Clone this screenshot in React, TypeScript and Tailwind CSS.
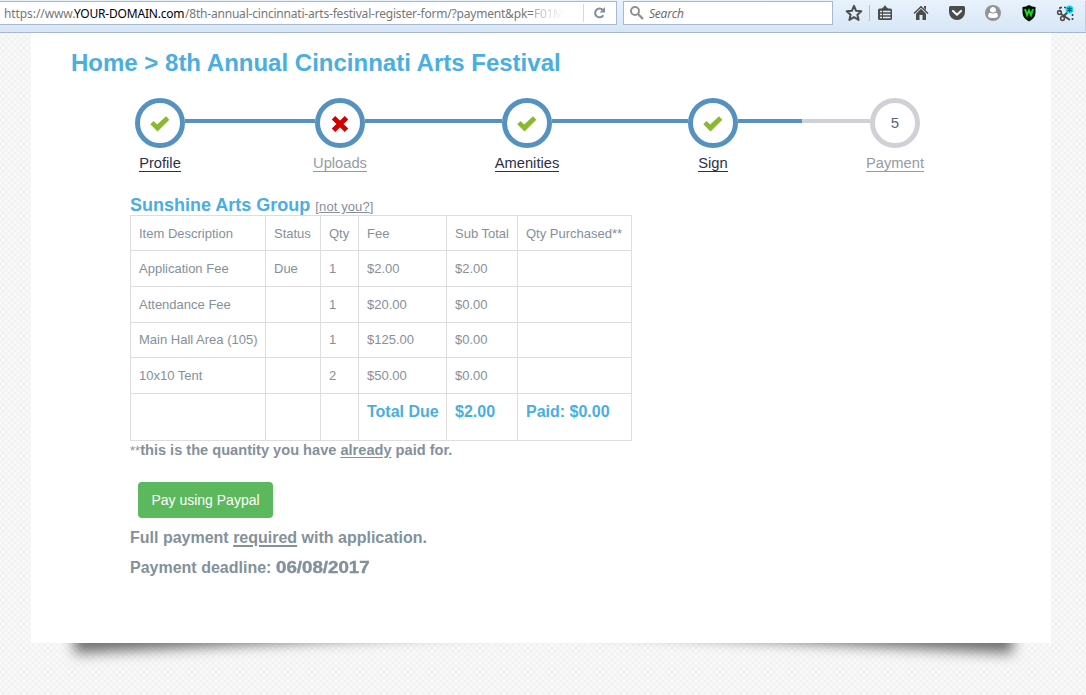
import React from "react";

type State = "done" | "missing" | "pending";

function Check() {
  return (
    <svg className="mt-px" width="20" height="16" viewBox="0 0 20 16">
      <path d="M0.3 8.2L3.5 4.9L7.2 8.5L16 0.3L19.3 3.7L7.5 15.6Z" fill="#8ab92d" />
    </svg>
  );
}

function Cross() {
  return (
    <svg className="mt-[2px]" width="16" height="16" viewBox="0 0 16 16">
      <path d="M3.3 3.5L12.7 12.5M12.7 3.5L3.3 12.5" stroke="#d20000" strokeWidth="5" strokeLinecap="square" />
    </svg>
  );
}

function Step({ label, state }: { label: string; state: State }) {
  return (
    <div className="flex w-[50px] shrink-0 flex-col items-center">
      <div
        className={
          "flex h-[50px] w-[50px] items-center justify-center rounded-full border-[5px] text-[15px] text-[#5c6472] " +
          (state === "pending" ? "border-[#cfd1d6]" : "border-[#5592c0]")
        }
      >
        {state === "done" && <Check />}
        {state === "missing" && <Cross />}
        {state === "pending" && "5"}
      </div>
      <a
        className={
          "mt-[6px] border-b text-[14.7px] leading-[17px] whitespace-nowrap " +
          (state === "done" ? "border-[#2b3048] text-[#2b3048]" : "border-[#959ba5] text-[#959ba5]")
        }
      >
        <span className="relative top-px">{label}</span>
      </a>
    </div>
  );
}

function Line({ className }: { className: string }) {
  return <div className={"mt-[21px] h-1 shrink-0 " + className} />;
}

const rows = [
  ["Item Description", "Status", "Qty", "Fee", "Sub Total", "Qty Purchased**"],
  ["Application Fee", "Due", "1", "$2.00", "$2.00", ""],
  ["Attendance Fee", "", "1", "$20.00", "$0.00", ""],
  ["Main Hall Area (105)", "", "1", "$125.00", "$0.00", ""],
  ["10x10 Tent", "", "2", "$50.00", "$0.00", ""],
];
const heights = ["h-[35px]", "h-[36px]", "h-[36px]", "h-[35px]", "h-[36px]"];
const cell = "border-r border-b border-[#dddddd] pl-2 whitespace-nowrap";

function Toolbar() {
  return (
    <header className="flex h-[33px] items-start border-b border-[#a5b8cd] bg-linear-to-b from-[#e8f2fc] to-[#d7e6f6] pt-px font-['Noto_Sans','Open_Sans',sans-serif] text-[12px] text-[#777]">
      <div className="flex h-6 w-[617px] shrink-0 items-center border border-l-0 border-[#a7b9cc] bg-white">
        <div className="flex w-[583px] items-center pt-px pl-[4px] leading-[22px] whitespace-nowrap">
          <span className="w-[70px] shrink-0 tracking-[-0.09px]">https://www.</span>
          <span className="w-[111px] shrink-0 tracking-[-0.2px] text-black">YOUR-DOMAIN.com</span>
          <span className="w-[349px] shrink-0 tracking-[-0.2px]">/8th-annual-cincinnati-arts-festival-register-form/?payment&amp;pk=</span>
          <span className="shrink-0 bg-linear-to-r from-[#aaa] to-[#fff] bg-clip-text tracking-[-0.3px] text-transparent">F01M</span>
        </div>
        <div className="h-[18px] w-px bg-[#d5d9de]" />
        <svg className="ml-[9px]" width="14" height="14" viewBox="0 0 14 14">
          <path d="M10.3 9.2A4.4 4.4 0 1 1 9.8 4" fill="none" stroke="#838d9b" strokeWidth="2" />
          <path d="M12 1V6.5H6.5Z" fill="#838d9b" />
        </svg>
      </div>
      <div className="ml-[6px] flex h-6 w-[210px] shrink-0 items-center border border-[#a7b9cc] bg-white pl-[6px]">
        <svg width="14" height="14" viewBox="0 0 14 14" fill="none" stroke="#919191" strokeWidth="2">
          <circle cx="5" cy="5" r="4" />
          <path d="M8 8L13 13" strokeWidth="2.4" />
        </svg>
        <span className="ml-[5px] pt-px font-['Open_Sans',sans-serif] tracking-[-0.2px] text-[#666] italic">Search</span>
      </div>
      <svg className="shrink-0" width="253" height="31" viewBox="833 1 253 31">
        <path d="M854 5.9L856.1 10.8L861.3 11.2L857.4 14.7L858.6 20L854 17.2L849.4 20L850.6 14.7L846.7 11.2L851.9 10.8Z" fill="none" stroke="#4d4d4d" strokeWidth="2" strokeLinejoin="round" />
        <path d="M869.5 5V21" stroke="#b2bfcd" />
        <path d="M882 8.5C882 7.5 884 7.8 884 6.5A1 1 0 0 1 886 6.5C886 7.8 888 7.5 888 8.5H890.5A1.5 1.5 0 0 1 892 10V18.5A1.5 1.5 0 0 1 890.5 20H879.500A1.500 1.500 0 0 1 878 18.500V10A1.500 1.500 0 0 1 879.500 8.500Z" fill="#4b4b4b" />
        <path d="M880 11.500H882M883 11.500H890.500M880 14.500H882M883 14.500H890.500M880 17.500H882M883 17.500H890.500" stroke="#e2edf8" strokeWidth="1.300" />
        <path d="M914 13.500L921 6.700L928 13.500" fill="none" stroke="#4b4b4b" strokeWidth="1.500" />
        <path d="M916 13.700L921 8.800L926 13.700V20H922.500V15H919.500V20H916Z" fill="#4b4b4b" />
        <path d="M924 6H926V10L924 8Z" fill="#4b4b4b" />
        <path d="M950.500 6H963.500A1.500 1.500 0 0 1 965 7.500V12A8 8 0 0 1 949 12V7.500A1.500 1.500 0 0 1 950.500 6Z" fill="#4b4b4b" />
        <path d="M953 11L957 14.800L961 11" fill="none" stroke="#f1f7fd" strokeWidth="2.200" strokeLinecap="round" strokeLinejoin="round" />
        <circle cx="993" cy="13" r="8" fill="#939393" />
        <path d="M993 7A3 3 0 0 1 995.300 12Q998 13 998 16Q997.500 18 993 18Q988.500 18 988 16Q988 13 990.700 12A3 3 0 0 1 993 7Z" fill="white" />
        <path d="M990 12.300Q993 14 996 12.300" fill="none" stroke="#939393" />
        <path d="M1029 5Q1032 7 1035.500 7V13Q1035 18.500 1029 21.500Q1023 18.500 1022.500 13V7Q1026 7 1029 5Z" fill="#071007" />
        <path d="M1025 9L1027 15L1029 10.500L1031 15L1033 9" fill="none" stroke="#13dc18" strokeWidth="2" />
        <path d="M1060 7.500H1066M1060 7V12M1072.500 14V20" fill="none" stroke="#444" strokeWidth="1.600" strokeDasharray="2 2" />
        <g fill="none" stroke="#4a4a4a" strokeWidth="1.500">
          <circle cx="1059.500" cy="12.500" r="1.900" />
          <circle cx="1062.500" cy="18.500" r="1.900" />
          <path d="M1061 14L1070 20M1063.500 16.500L1068.500 11" strokeWidth="2" />
        </g>
        <circle cx="1069.500" cy="9.500" r="4" fill="#16def0" />
        <path d="M1069.500 6.800V12.200M1067 8L1072 11M1072 8L1067 11" stroke="#075d72" strokeWidth="1.200" />
        <path d="M1085.500 1V31" stroke="#c0cfdf" />
      </svg>
    </header>
  );
}

export default function App() {
  return (
    <div className="relative isolate flex h-[695px] w-[1086px] flex-col overflow-hidden bg-[#f8f8f8] font-['Liberation_Sans',Arial,sans-serif] text-[#84919a]">
      <svg className="absolute inset-0 -z-20" width="1086" height="695">
        <defs>
          <pattern id="mesh" width="6" height="6" patternUnits="userSpaceOnUse">
            <path d="M0 0L6 6M6 0L0 6" stroke="#f0f0f0" strokeWidth="1" />
          </pattern>
        </defs>
        <rect width="1086" height="695" fill="url(#mesh)" />
      </svg>
      <Toolbar />
      <div className="relative ml-[31px] h-[610px] w-[1020px] shrink-0">
        <div className="absolute bottom-[17px] left-[41px] -z-10 h-[60px] w-[480px] -rotate-3 shadow-[0_15px_13px_#707070]" />
        <div className="absolute right-[36px] bottom-[17px] -z-10 h-[60px] w-[480px] rotate-3 shadow-[0_15px_13px_#707070]" />
        <main className="h-full bg-white pt-[16px]">
          <h1 className="pl-10 text-[24px] leading-[28px] font-bold text-[#49aee0]">Home &gt; 8th Annual Cincinnati Arts Festival</h1>
          <div className="mt-[21px] flex h-[74px] items-start pl-[104px]">
            <Step label="Profile" state="done" />
            <Line className="w-[130px] bg-[#5592c0]" />
            <Step label="Uploads" state="missing" />
            <Line className="w-[137px] bg-[#5592c0]" />
            <Step label="Amenities" state="done" />
            <Line className="w-[136px] bg-[#5592c0]" />
            <Step label="Sign" state="done" />
            <Line className="w-[64px] bg-[#5592c0]" />
            <Line className="w-[68px] bg-[#cfd1d4]" />
            <Step label="Payment" state="pending" />
          </div>
          <section className="mt-[22px] pl-[99px]">
            <div className="flex h-[21px] items-baseline leading-[23px]">
              <h2 className="text-[18px] font-bold text-[#49aee0]">Sunshine Arts Group</h2>
              <span className="ml-[5px] text-[13px] tracking-[0.1px]">
                [<a className="underline underline-offset-1">not you?</a>]
              </span>
            </div>
            <table className="w-[502px] table-fixed border-separate border-spacing-0 border-t border-l border-[#dddddd] text-[13px]">
              <colgroup>
                <col className="w-[135px]" />
                <col className="w-[55px]" />
                <col className="w-[38px]" />
                <col className="w-[88px]" />
                <col className="w-[71px]" />
                <col className="w-[114px]" />
              </colgroup>
              <tbody>
                {rows.map((r, i) => (
                  <tr key={i} className={heights[i]}>
                    {r.map((c, j) => (
                      <td key={j} className={cell + (i === 0 ? " pt-[2px]" : "")}>{c}</td>
                    ))}
                  </tr>
                ))}
                <tr className="h-[47px] align-top text-[16px] leading-[18px] font-bold text-[#49aee0]">
                  <td className={cell} />
                  <td className={cell} />
                  <td className={cell} />
                  <td className={cell + " pt-[9px]"}>Total Due</td>
                  <td className={cell + " pt-[9px]"}>$2.00</td>
                  <td className={cell + " pt-[9px]"}>Paid: $0.00</td>
                </tr>
              </tbody>
            </table>
            <p className="text-[14.6px] leading-[18px] font-bold">
              <span className="text-[13px] font-normal">**</span>this is the quantity you have{" "}
              <span className="underline underline-offset-2">already</span> paid for.
            </p>
            <button className="mt-[22px] ml-2 block h-9 w-[135px] rounded-[4px] bg-[#5cb85c] text-[14px] text-white">Pay using Paypal</button>
            <p className="mt-[11px] text-[16px] leading-[18px] font-bold">
              Full payment <span className="underline decoration-2 underline-offset-2">required</span> with application.
            </p>
            <p className="mt-3 text-[16px] leading-[18px] font-bold">
              Payment deadline: <span className="inline-block origin-left scale-x-[1.17] [-webkit-text-stroke:0.4px_#84919a]">06/08/2017</span>
            </p>
          </section>
        </main>
      </div>
    </div>
  );
}
